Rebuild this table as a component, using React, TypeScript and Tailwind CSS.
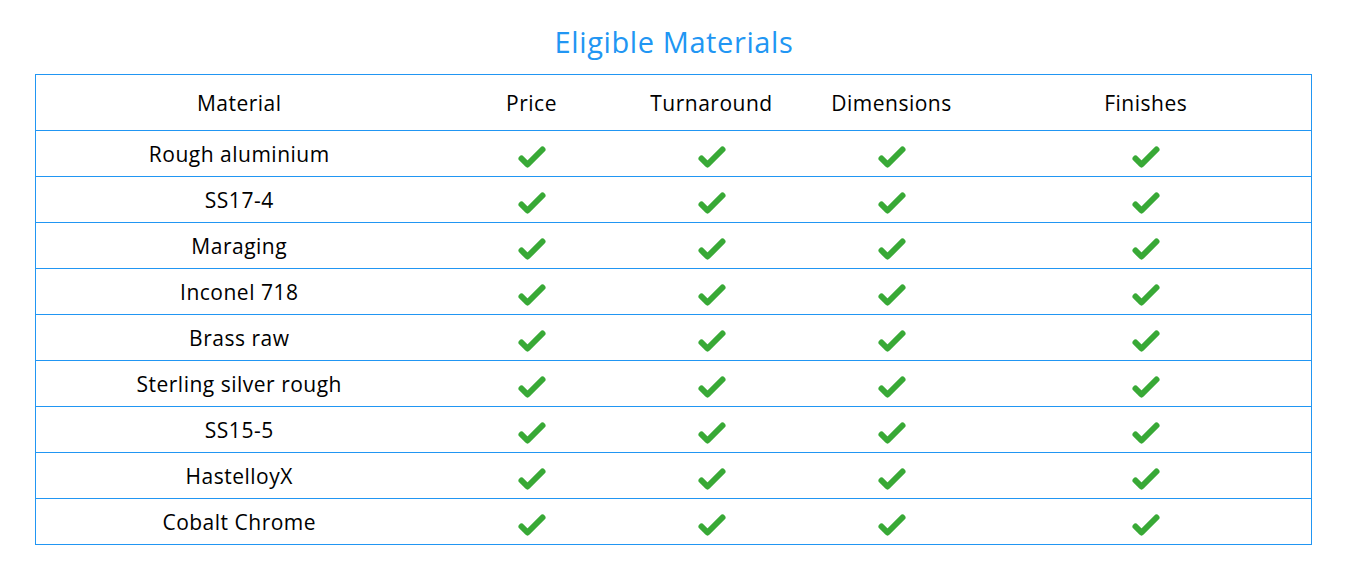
import React from "react";

const materials = [
  "Rough aluminium",
  "SS17-4",
  "Maraging",
  "Inconel 718",
  "Brass raw",
  "Sterling silver rough",
  "SS15-5",
  "HastelloyX",
  "Cobalt Chrome",
];

const Check = () => (
  <svg
    viewBox="0 0 30 25"
    className="inline-block w-[30px] h-[25px] align-middle translate-y-[1px]"
  >
    <polyline
      points="4.5,13.5 10.5,19.5 25.5,4.5"
      fill="none"
      stroke="#38a936"
      strokeWidth="6"
      strokeLinecap="round"
      strokeLinejoin="round"
    />
  </svg>
);

export default function App() {
  return (
    <div
      className="w-[1348px] h-[579px] bg-white pt-[24px] px-[35px]"
      style={{ fontFamily: '"Open Sans", "Noto Sans", sans-serif' }}
    >
      <h1 className="text-center text-[29px] leading-[36px] text-[#2196f3] mb-[14px] tracking-[0.6px]">
        Eligible Materials
      </h1>
      <table className="w-[1277px] border border-[#2196f3] border-collapse text-[21px] tracking-[0.5px] text-black">
        <colgroup>
          <col className="w-[407px]" />
          <col className="w-[178px]" />
          <col className="w-[182px]" />
          <col className="w-[178px]" />
          <col />
        </colgroup>
        <thead>
          <tr className="h-[56px] border-b border-[#2196f3]">
            <th className="font-normal pt-[2px]">Material</th>
            <th className="font-normal pt-[2px]">Price</th>
            <th className="font-normal pt-[2px]">Turnaround</th>
            <th className="font-normal pt-[2px]">Dimensions</th>
            <th className="font-normal pt-[2px]">Finishes</th>
          </tr>
        </thead>
        <tbody>
          {materials.map((m) => (
            <tr key={m} className="h-[46px] border-b border-[#2196f3]">
              <td className="text-center pt-[2px]">{m}</td>
              <td className="text-center pt-[2px]"><Check /></td>
              <td className="text-center pt-[2px]"><Check /></td>
              <td className="text-center pt-[2px]"><Check /></td>
              <td className="text-center pt-[2px]"><Check /></td>
            </tr>
          ))}
        </tbody>
      </table>
    </div>
  );
}
